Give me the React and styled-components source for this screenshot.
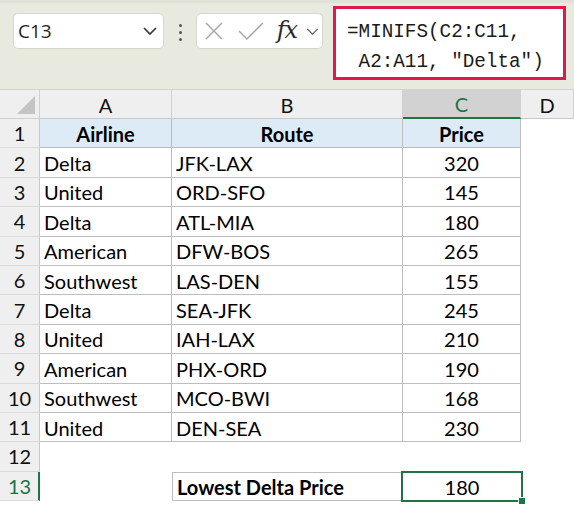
import React from 'react';
import styled, { createGlobalStyle } from 'styled-components';

const GlobalStyle = createGlobalStyle`
  html, body {
    margin: 0;
    padding: 0;
    background: #ffffff;
    overflow: hidden;
  }
  * {
    box-sizing: border-box;
  }
`;

const CELL_FONT = `Lato, "Open Sans", sans-serif`;
const GREEN = '#217346';
const LINE = '#bdbdbd';

const Page = styled.div`
  width: 574px;
  height: 506px;
  display: flex;
  flex-direction: column;
`;

const Toolbar = styled.div`
  height: 90px;
  flex: none;
  background: #e9eadf;
  border-top: 3px solid #e0e1d7;
  border-bottom: 1px solid #d4d4cc;
  display: flex;
  align-items: flex-start;
  padding: 3px 0 0 13px;
`;

const NameBox = styled.div`
  margin-top: 7px;
  width: 151px;
  height: 36px;
  background: #fff;
  border: 1px solid #d6d6d0;
  border-radius: 5px;
  display: flex;
  align-items: center;
  justify-content: space-between;
  padding: 0 6px 0 4px;
  font-family: "Open Sans", sans-serif;
  font-size: 19px;
  color: #1f1f1f;
`;

const Dots = styled.div`
  margin: 18px 14px 0 15px;
  display: flex;
  flex-direction: column;
  gap: 4px;
  span {
    width: 3px;
    height: 3px;
    border-radius: 50%;
    background: #555;
  }
`;

const ButtonBox = styled.div`
  margin-top: 7px;
  width: 127px;
  height: 36px;
  background: #fff;
  border: 1px solid #d6d6d0;
  border-radius: 5px;
  display: flex;
  align-items: center;
  padding: 0 3px 0 8px;
`;

const Fx = styled.span`
  font-family: "DejaVu Serif", "Liberation Serif", serif;
  font-style: italic;
  font-size: 24px;
  color: #2b2b2b;
  margin: -3px 9px 0 13px;
  letter-spacing: -1px;
`;

const FormulaBox = styled.div`
  margin-left: 10px;
  width: 233px;
  height: 74px;
  background: #fff;
  border: 3px solid #e0184b;
  padding: 8px 0 0 11px;
  font-family: "Liberation Mono", "DejaVu Sans Mono", monospace;
  font-size: 19.3px;
  line-height: 30px;
  color: #1a1a1a;
  white-space: pre;
`;

const Sheet = styled.div`
  flex: 1;
  display: grid;
  grid-template-columns: 40px 132px 231px 118px 1fr;
  grid-template-rows: 29px repeat(13, 29.4px);
  align-content: start;
  font-family: ${CELL_FONT};
  font-size: 20px;
  color: #000;
`;

const Corner = styled.div`
  background: #efefef;
  border-right: 1px solid #d0d0d0;
  border-bottom: 1px solid #d0d0d0;
  display: flex;
  align-items: flex-end;
  justify-content: flex-end;
  padding: 0 4px 4px 0;
`;

const ColHead = styled.div`
  background: ${(p) => (p.$active ? '#d2d2d2' : '#efefef')};
  color: ${(p) => (p.$active ? GREEN : '#111')};
  border-right: 1px solid #d0d0d0;
  border-bottom: ${(p) => (p.$active ? `2px solid ${GREEN}` : '1px solid #c8c8c8')};
  display: flex;
  align-items: center;
  justify-content: center;
  padding-top: 1px;
`;

const RowHead = styled.div`
  background: #efefef;
  color: ${(p) => (p.$active ? GREEN : '#111')};
  border-right: ${(p) => (p.$active ? `2px solid ${GREEN}` : '1px solid #c8c8c8')};
  border-bottom: 1px solid #dadada;
  display: flex;
  align-items: center;
  justify-content: center;
  padding-left: ${(p) => (p.$active ? '1px' : '0')};
`;

const Cell = styled.div`
  position: relative;
  background: ${(p) => (p.$head ? '#ddebf7' : '#fff')};
  font-weight: ${(p) => (p.$bold ? 700 : 400)};
  border-right: ${(p) => (p.$grid ? `1px solid ${LINE}` : 'none')};
  border-bottom: ${(p) => (p.$grid ? `1px solid ${LINE}` : 'none')};
  border-top: ${(p) => (p.$boxed ? `1px solid ${LINE}` : 'none')};
  border-left: ${(p) => (p.$boxed ? `1px solid ${LINE}` : 'none')};
  display: flex;
  align-items: center;
  justify-content: ${(p) => (p.$center ? 'center' : 'flex-start')};
  padding: 1px 4px 0;
  white-space: nowrap;
  z-index: ${(p) => (p.$selected ? 2 : 'auto')};
`;

const Selection = styled.div`
  position: absolute;
  left: -2px;
  top: -1px;
  right: -2px;
  bottom: -1px;
  border: 2px solid ${GREEN};
  pointer-events: none;
`;

const Handle = styled.div`
  position: absolute;
  right: -5px;
  bottom: -5px;
  width: 8px;
  height: 8px;
  background: ${GREEN};
  border: 1px solid #fff;
`;

const rows = [
  ['Delta', 'JFK-LAX', 320],
  ['United', 'ORD-SFO', 145],
  ['Delta', 'ATL-MIA', 180],
  ['American', 'DFW-BOS', 265],
  ['Southwest', 'LAS-DEN', 155],
  ['Delta', 'SEA-JFK', 245],
  ['United', 'IAH-LAX', 210],
  ['American', 'PHX-ORD', 190],
  ['Southwest', 'MCO-BWI', 168],
  ['United', 'DEN-SEA', 230],
];

function Chevron({ w = 14, h = 8, color = '#333' }) {
  return (
    <svg width={w} height={h} viewBox="0 0 14 8">
      <path d="M1 1 L7 7 L13 1" fill="none" stroke={color} strokeWidth="1.6" />
    </svg>
  );
}

function CornerMark() {
  return (
    <svg width="18" height="18" viewBox="0 0 18 18">
      <path d="M18 0 L18 18 L0 18 Z" fill="#c4c4c4" />
    </svg>
  );
}

export default function App() {
  return (
    <Page>
      <GlobalStyle />
      <Toolbar>
        <NameBox>
          <span>C13</span>
          <Chevron />
        </NameBox>
        <Dots>
          <span />
          <span />
          <span />
        </Dots>
        <ButtonBox>
          <svg width="18" height="18" viewBox="0 0 18 18">
            <path d="M1 1 L17 17 M17 1 L1 17" stroke="#a8a8a8" strokeWidth="1.5" />
          </svg>
          <svg width="26" height="18" viewBox="0 0 26 18" style={{ marginLeft: 15 }}>
            <path d="M1 9 L9 17 L25 1" fill="none" stroke="#a8a8a8" strokeWidth="1.5" />
          </svg>
          <Fx>fx</Fx>
          <Chevron w={13} h={7} color="#666" />
        </ButtonBox>
        <FormulaBox>{'=MINIFS(C2:C11,\n A2:A11, "Delta")'}</FormulaBox>
      </Toolbar>

      <Sheet>
        <Corner>
          <CornerMark />
        </Corner>
        <ColHead>A</ColHead>
        <ColHead>B</ColHead>
        <ColHead $active>C</ColHead>
        <ColHead>D</ColHead>

        <RowHead>1</RowHead>
        <Cell $grid $head $bold $center>Airline</Cell>
        <Cell $grid $head $bold $center>Route</Cell>
        <Cell $grid $head $bold $center>Price</Cell>
        <Cell />

        {rows.map((r, i) => (
          <React.Fragment key={i}>
            <RowHead>{i + 2}</RowHead>
            <Cell $grid>{r[0]}</Cell>
            <Cell $grid>{r[1]}</Cell>
            <Cell $grid $center>{r[2]}</Cell>
            <Cell />
          </React.Fragment>
        ))}

        <RowHead>12</RowHead>
        <Cell />
        <Cell />
        <Cell />
        <Cell />

        <RowHead $active>13</RowHead>
        <Cell />
        <Cell $grid $boxed $bold>Lowest Delta Price</Cell>
        <Cell $center $selected>
          180
          <Selection>
            <Handle />
          </Selection>
        </Cell>
        <Cell />
      </Sheet>
    </Page>
  );
}
